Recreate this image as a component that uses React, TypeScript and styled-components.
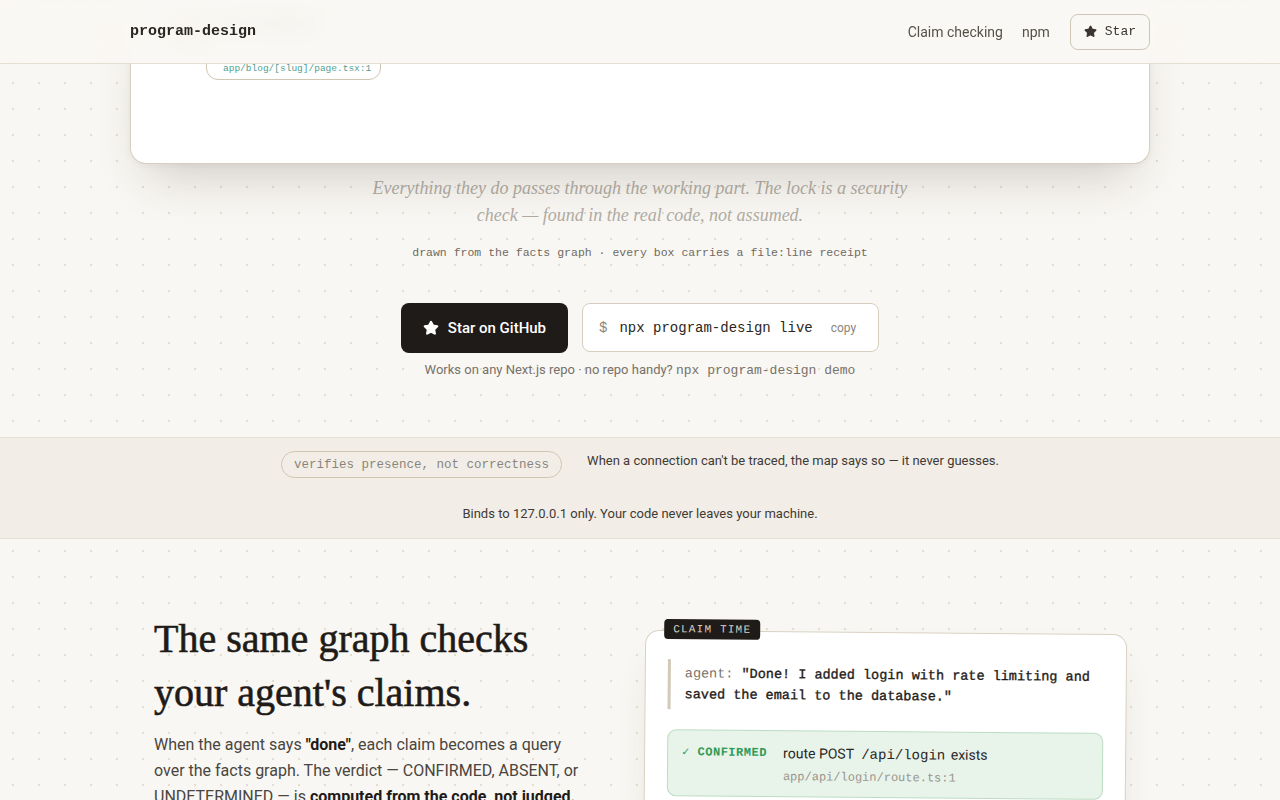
import { Star } from "lucide-react";
import styled, { createGlobalStyle } from "styled-components";

const SANS = `Roboto, "Liberation Sans", sans-serif`;
const MONO = `"Liberation Mono", "DejaVu Sans Mono", monospace`;
const SERIF = `"Liberation Serif", "DejaVu Serif", serif`;

const GlobalStyle = createGlobalStyle`
  html, body {
    margin: 0;
    padding: 0;
  }

  body {
    background-color: #f9f7f3;
    background-image: radial-gradient(circle at 13px 13px, #e3ded4 1px, transparent 1.6px);
    background-size: 26px 26px;
    background-position: 0 -8px;
    font-family: ${SANS};
    color: #2a2622;
    -webkit-font-smoothing: antialiased;
  }

  * {
    box-sizing: border-box;
  }
`;

export default function App() {
  return (
    <>
      <GlobalStyle />
      <Header>
        <HeaderInner>
          <Logo>program-design</Logo>
          <Nav>
            <NavLink>Claim checking</NavLink>
            <NavLink>npm</NavLink>
            <StarButton>
              <Star size={13} fill="currentColor" strokeWidth={2} />
              Star
            </StarButton>
          </Nav>
        </HeaderInner>
      </Header>

      <Hero>
        <DiagramCard>
          <LockMark style={{ left: 42, top: 18 }} />
          <Node style={{ left: 75, top: 8 }}>
            <NodeTitle>page /blog/[slug]</NodeTitle>
            <NodeFile>app/blog/[slug]/page.tsx:1</NodeFile>
          </Node>
        </DiagramCard>

        <Caption>
          Everything they do passes through the working part. The lock is a
          security check — found in the real code, not assumed.
        </Caption>
        <Receipt>
          drawn from the facts graph · every box carries a file:line receipt
        </Receipt>

        <Actions>
          <GithubButton>
            <Star size={16} fill="currentColor" strokeWidth={2} />
            Star on GitHub
          </GithubButton>
          <Command>
            <Prompt>$</Prompt>
            <CommandText>npx program-design live</CommandText>
            <CopyLabel>copy</CopyLabel>
          </Command>
        </Actions>
        <Hint>
          Works on any Next.js repo · no repo handy? <code>npx program-design demo</code>
        </Hint>
      </Hero>

      <Band>
        <BandRow>
          <Pill>verifies presence, not correctness</Pill>
          <BandText>
            When a connection can't be traced, the map says so — it never guesses.
          </BandText>
        </BandRow>
        <BandText>Binds to 127.0.0.1 only. Your code never leaves your machine.</BandText>
      </Band>

      <ClaimSection>
        <Copy>
          <Heading>
            The same graph checks
            <br />
            your agent's claims.
          </Heading>
          <Body>
            When the agent says <strong>"done"</strong>, each claim becomes a
            query over the facts graph. The verdict — CONFIRMED, ABSENT, or
            UNDETERMINED — is <strong>computed from the code, not judged.</strong>{" "}
            No model is asked to grade another.
          </Body>
        </Copy>

        <ClaimCard>
          <ClaimBadge>CLAIM TIME</ClaimBadge>
          <Quote>
            <Speaker>agent:</Speaker> "Done! I added login with rate limiting
            and saved the email to the database."
          </Quote>
          <Verdict tone="ok">
            <VerdictLabel tone="ok">✓ CONFIRMED</VerdictLabel>
            <VerdictBody>
              <VerdictClaim>
                route POST <code>/api/login</code> exists
              </VerdictClaim>
              <VerdictFile>app/api/login/route.ts:1</VerdictFile>
            </VerdictBody>
          </Verdict>
          <Verdict tone="missing">
            <VerdictLabel tone="missing">✗ ABSENT</VerdictLabel>
            <VerdictBody>
              <VerdictClaim>rate limit on login</VerdictClaim>
              <VerdictFile>no matching fact</VerdictFile>
            </VerdictBody>
          </Verdict>
        </ClaimCard>
      </ClaimSection>
    </>
  );
}

const Header = styled.header`
  position: fixed;
  top: 0;
  left: 0;
  right: 0;
  z-index: 10;
  height: 64px;
  background: rgba(249, 247, 243, 0.9);
  backdrop-filter: blur(12px);
  border-bottom: 1px solid #e4ded3;
`;

const HeaderInner = styled.div`
  max-width: 1020px;
  height: 100%;
  margin: 0 auto;
  display: flex;
  align-items: center;
  justify-content: space-between;
`;

const Logo = styled.div`
  font-family: ${MONO};
  font-size: 15px;
  font-weight: 600;
  color: #2a2622;
`;

const Nav = styled.nav`
  display: flex;
  align-items: center;
  gap: 19px;
`;

const NavLink = styled.a`
  font-size: 14px;
  color: #56514a;
  cursor: pointer;
`;

const StarButton = styled.button`
  display: flex;
  align-items: center;
  gap: 8px;
  height: 36px;
  padding: 0 13px;
  margin-left: 1px;
  background: transparent;
  border: 1px solid #cdc6b4;
  border-radius: 8px;
  font-family: ${MONO};
  font-size: 13px;
  color: #3a3530;
  cursor: pointer;
`;

const Hero = styled.section`
  max-width: 1020px;
  margin: 0 auto;
  padding-bottom: 56px;
  display: flex;
  flex-direction: column;
  align-items: center;
`;

const DiagramCard = styled.div`
  position: relative;
  width: 100%;
  height: 164px;
  background: #fff;
  border: 1px solid #d6cfbf;
  border-top: none;
  border-radius: 0 0 16px 16px;
  box-shadow: 0 28px 50px -18px rgba(60, 50, 35, 0.22), 0 2px 6px rgba(60, 50, 35, 0.05);
`;

/* lock glyph sitting on the edge into the page node */
const LockMark = styled.div`
  position: absolute;
  width: 34px;
  height: 26px;
  border-radius: 6px;
  background: #cfc8bb;
`;

const Node = styled.div`
  position: absolute;
  width: 175px;
  padding: 8px 16px 3px;
  background: #fff;
  border: 1px solid #cfc6b3;
  border-radius: 12px;
`;

const NodeTitle = styled.div`
  font-size: 12px;
  font-weight: 600;
  color: #2a2622;
  margin-bottom: 31px;
`;

const NodeFile = styled.div`
  font-family: ${MONO};
  font-size: 9.5px;
  line-height: 14px;
  color: #4f9f93;
`;

const Caption = styled.p`
  max-width: 550px;
  margin: 11px 0 0;
  font-family: ${SERIF};
  font-style: italic;
  font-size: 18px;
  line-height: 27px;
  text-align: center;
  color: #b1aca3;
`;

const Receipt = styled.div`
  margin-top: 15px;
  font-family: ${MONO};
  font-size: 11.5px;
  line-height: 18px;
  color: #6f6a62;
`;

const Actions = styled.div`
  display: flex;
  gap: 14px;
  margin-top: 41px;
`;

const GithubButton = styled.button`
  display: flex;
  align-items: center;
  gap: 9px;
  height: 50px;
  padding: 0 22px;
  background: #1f1b18;
  color: #fff;
  border: none;
  border-radius: 8px;
  font-family: ${SANS};
  font-size: 15px;
  font-weight: 500;
  cursor: pointer;
`;

const Command = styled.div`
  display: flex;
  align-items: center;
  height: 49px;
  padding: 0 22px 0 16px;
  background: #fff;
  border: 1px solid #d6cfc0;
  border-radius: 8px;
`;

const Prompt = styled.span`
  font-family: ${MONO};
  font-size: 14px;
  color: #8a857c;
  margin-right: 12px;
`;

const CommandText = styled.span`
  font-family: ${MONO};
  font-size: 14px;
  color: #2a2622;
  margin-right: 18px;
`;

const CopyLabel = styled.span`
  font-size: 12px;
  color: #8a857c;
`;

const Hint = styled.div`
  margin-top: 7px;
  font-size: 13px;
  line-height: 20px;
  color: #77726a;

  code {
    font-family: ${MONO};
    font-size: 13px;
  }
`;

const Band = styled.section`
  display: flex;
  flex-direction: column;
  align-items: center;
  gap: 26px;
  padding: 13px 0 14px;
  background: #f2eee7;
  border-top: 1px solid #e4ded3;
  border-bottom: 1px solid #e4ded3;
`;

const BandRow = styled.div`
  display: flex;
  align-items: flex-start;
  gap: 25px;
`;

const Pill = styled.span`
  display: inline-flex;
  align-items: center;
  height: 27px;
  padding: 0 12px;
  border: 1px solid #cfc6b3;
  border-radius: 999px;
  font-family: ${MONO};
  font-size: 12.5px;
  color: #8a857c;
`;

const BandText = styled.span`
  font-size: 13px;
  line-height: 20px;
  color: #3f3a35;
`;

const ClaimSection = styled.section`
  max-width: 972px;
  margin: 0 auto;
  padding: 73px 0 80px;
  display: grid;
  grid-template-columns: 440px 482px;
  justify-content: space-between;
  align-items: start;
`;

const Copy = styled.div`
  display: flex;
  flex-direction: column;
`;

const Heading = styled.h2`
  margin: 0;
  font-family: ${SERIF};
  font-size: 40px;
  font-weight: 400;
  line-height: 54px;
  color: #1f1b18;
  -webkit-text-stroke: 0.6px #1f1b18;
`;

const Body = styled.p`
  margin: 12px 0 0;
  font-size: 16px;
  line-height: 26px;
  color: #4a453f;

  strong {
    color: #1f1b18;
    font-weight: 700;
  }
`;

const ClaimCard = styled.div`
  position: relative;
  margin-top: 20px;
  padding: 28px 22px 22px;
  background: #fff;
  border: 1px solid #d9d2c3;
  border-radius: 14px;
  box-shadow: 0 20px 40px -16px rgba(60, 50, 35, 0.18);
  transform: rotate(0.5deg);
  display: flex;
  flex-direction: column;
  gap: 20px;
`;

const ClaimBadge = styled.span`
  position: absolute;
  top: -12px;
  left: 18px;
  padding: 4px 9px;
  background: #1f1b18;
  border-radius: 4px;
  font-family: ${MONO};
  font-size: 11px;
  letter-spacing: 1.2px;
  color: #d8d2c6;
`;

const Quote = styled.div`
  padding: 4px 0 4px 14px;
  border-left: 3px solid #d2cab9;
  font-family: ${MONO};
  font-size: 13.5px;
  line-height: 21px;
  font-weight: 400;
  color: #1f1b18;
  -webkit-text-stroke: 0.35px #1f1b18;
`;

const Speaker = styled.span`
  color: #77726a;
  -webkit-text-stroke: 0;
`;

type Tone = "ok" | "missing";

const Verdict = styled.div<{ tone: Tone }>`
  display: flex;
  gap: 13px;
  padding: 12px 14px 11px;
  border-radius: 9px;
  background: ${(p) => (p.tone === "ok" ? "#e8f3ea" : "#f8ebe7")};
  border: 1px solid ${(p) => (p.tone === "ok" ? "#bcdcc3" : "#e6c3b9")};
`;

const VerdictLabel = styled.span<{ tone: Tone }>`
  flex: 0 0 88px;
  font-family: ${MONO};
  font-size: 12px;
  font-weight: 700;
  letter-spacing: 0.5px;
  line-height: 20px;
  color: ${(p) => (p.tone === "ok" ? "#2f9a55" : "#b8503a")};
`;

const VerdictBody = styled.div`
  display: flex;
  flex-direction: column;
  gap: 5px;
`;

const VerdictClaim = styled.span`
  font-size: 14px;
  line-height: 20px;
  color: #2a2622;

  code {
    font-family: ${MONO};
    font-size: 14px;
    margin: 0 2px 0 4px;
  }
`;

const VerdictFile = styled.span`
  font-family: ${MONO};
  font-size: 12px;
  line-height: 16px;
  color: #9a958c;
`;
